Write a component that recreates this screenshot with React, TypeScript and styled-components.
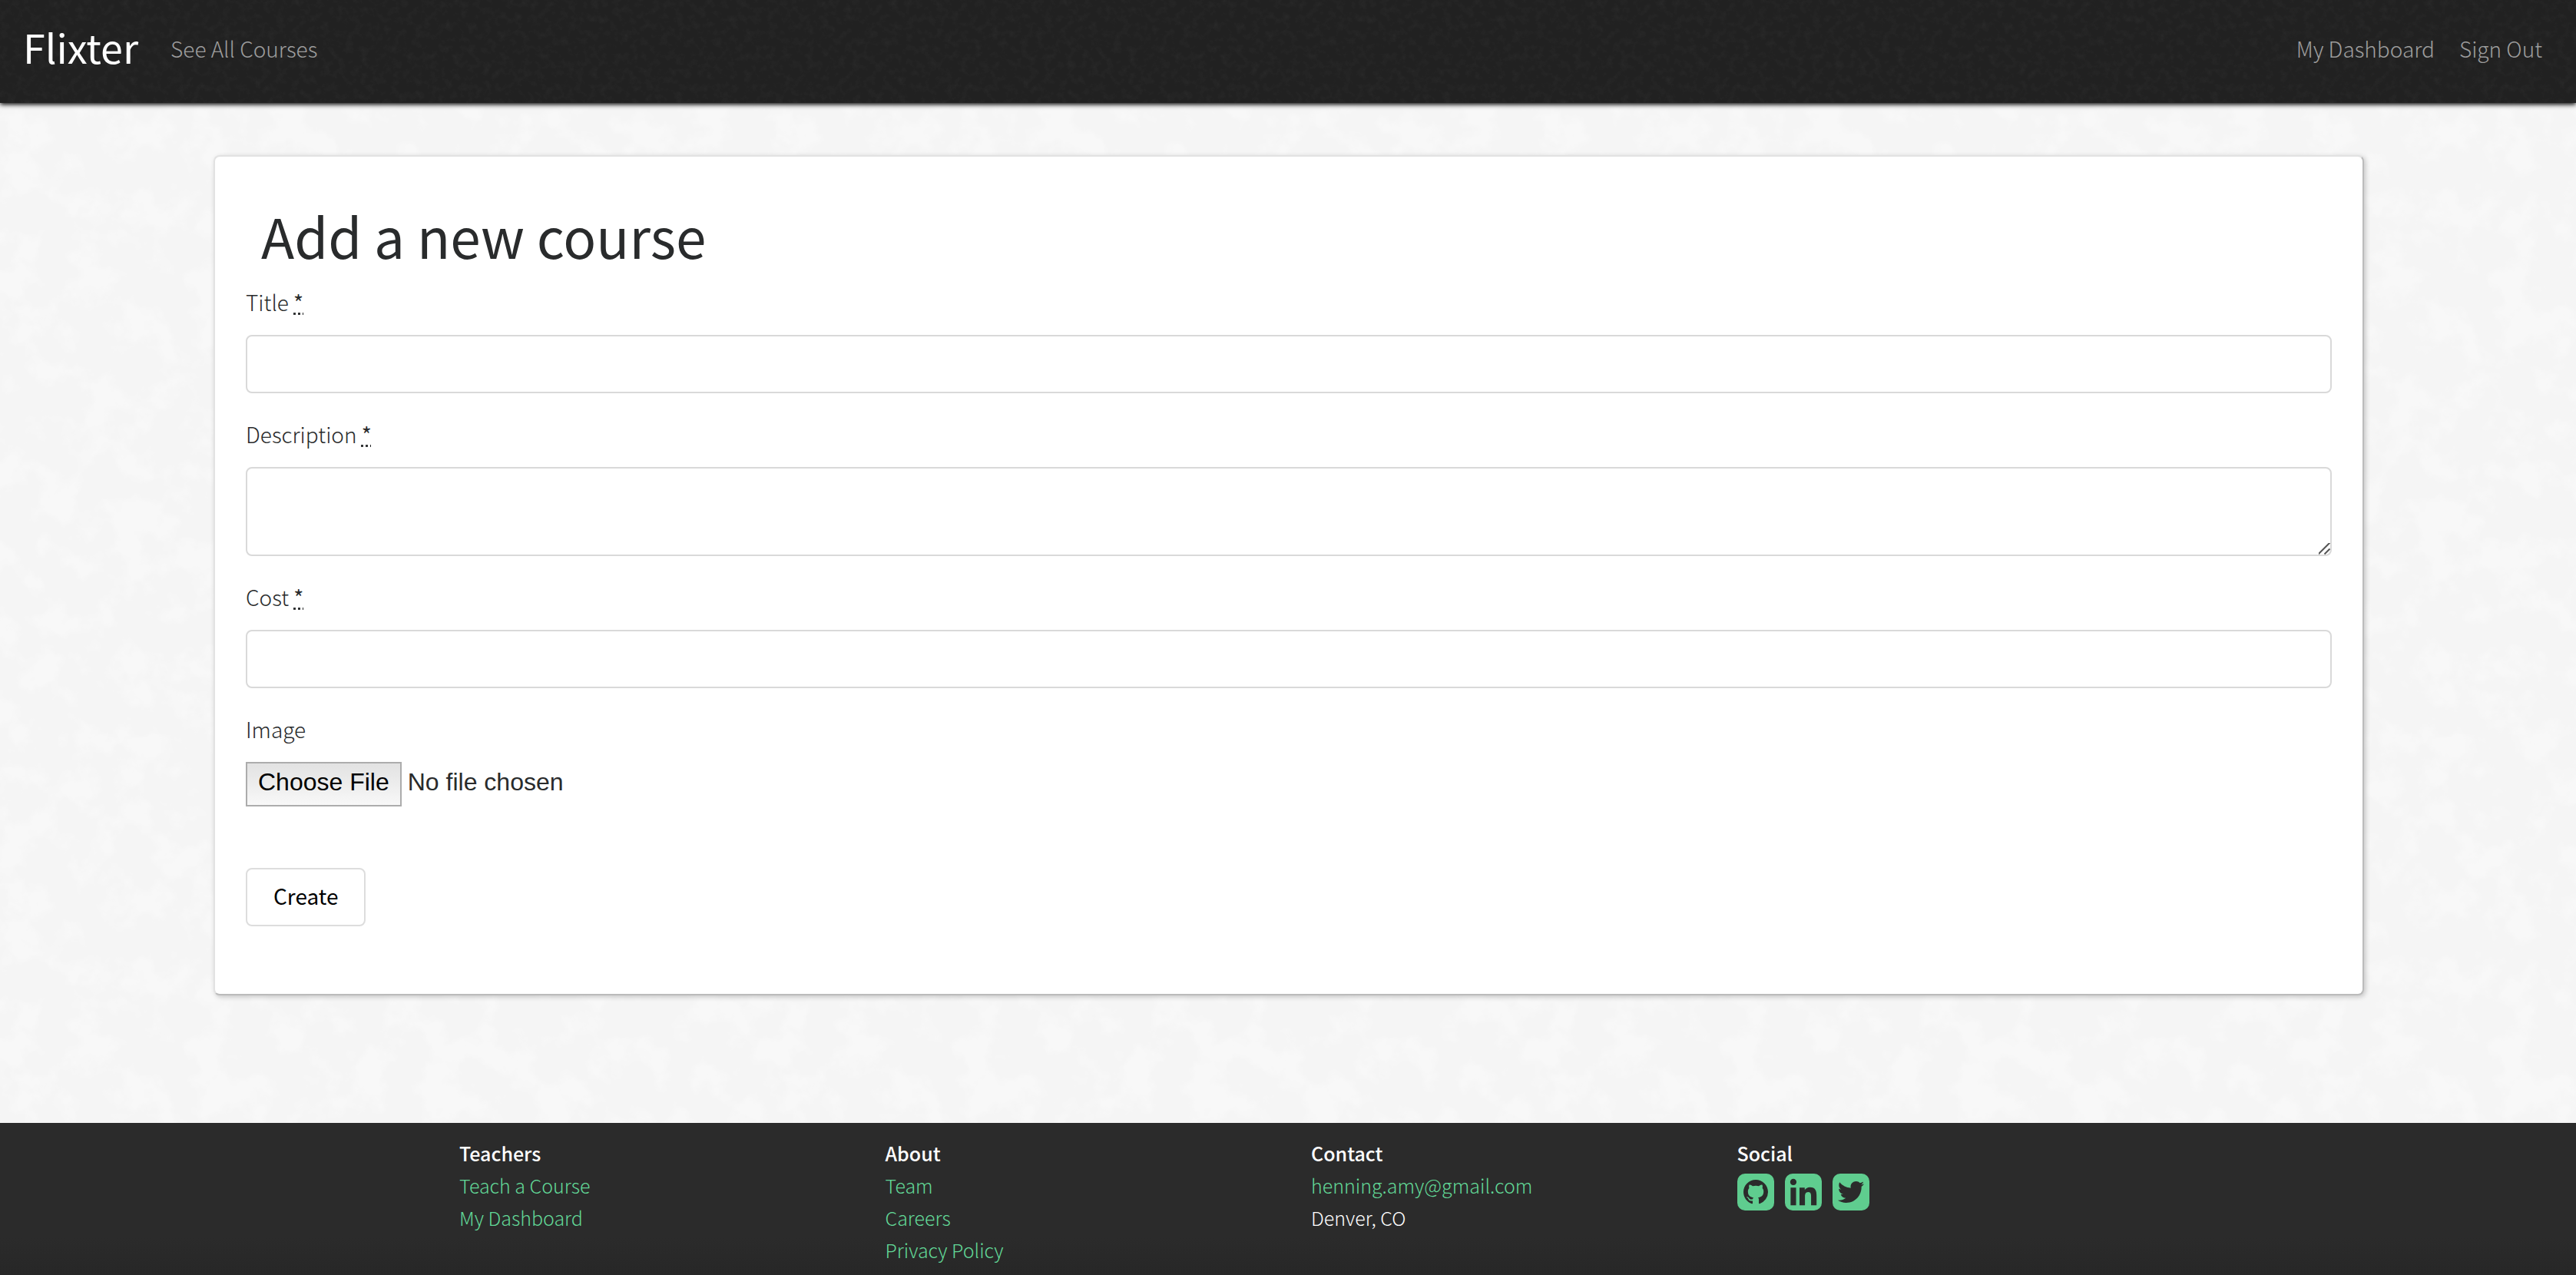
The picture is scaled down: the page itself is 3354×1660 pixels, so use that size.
import React from "react";
import styled, { createGlobalStyle } from "styled-components";
import { FaLinkedin, FaTwitterSquare } from "react-icons/fa";

const sans = `"Source Sans Pro", "Noto Sans CJK JP", "Noto Sans", sans-serif`;

const svgUrl = (svg: string) => `url("data:image/svg+xml,${encodeURIComponent(svg)}")`;

/* A seamless tile of soft white speckles. */
const speckle = (alpha: string, frequency: number, opacity: number) =>
  svgUrl(
    `<svg xmlns="http://www.w3.org/2000/svg" width="1000" height="1000"><filter id="n" x="0" y="0" width="100%" height="100%"><feTurbulence type="fractalNoise" baseFrequency="${frequency}" numOctaves="6" seed="7" stitchTiles="stitch"/><feColorMatrix values="0 0 0 0 1  0 0 0 0 1  0 0 0 0 1  ${alpha}"/></filter><rect width="1000" height="1000" filter="url(#n)" opacity="${opacity}"/></svg>`
  );

const grip = svgUrl(
  `<svg xmlns="http://www.w3.org/2000/svg" width="16" height="16"><path d="M0 15L15 0M8 15L15 8" stroke="#555" stroke-width="2"/></svg>`
);

const GlobalStyle = createGlobalStyle`
  * { box-sizing: border-box; }
  body {
    margin: 0;
    background: #f5f5f5 ${speckle("5 0 0 0 -2.4", 0.02, 0.35)};
    color: #292b2c;
    font-family: ${sans};
    font-size: 28px;
    font-weight: 300;
    line-height: 48px;
  }
  a { text-decoration: none; }
`;

const Page = styled.div`
  display: flex;
  flex-direction: column;
  min-height: 100vh;
`;

const Navbar = styled.nav`
  display: flex;
  align-items: center;
  gap: 32px;
  height: 134px;
  padding: 0 44px 8px 30px;
  background: #212121 ${speckle("2 0 0 0 -1", 0.1, 0.04)};
  box-shadow: 0 2px 6px #000;
`;

const Brand = styled.a`
  margin-right: 10px;
  padding-bottom: 4px;
  color: #fff;
  font-size: 52px;
  font-weight: 400;
  line-height: 84px;
`;

const NavLink = styled.a`
  color: #9d9d9d;
`;

const Spacer = styled.div`
  flex: 1;
`;

const Main = styled.main`
  flex: 1;
  padding: 68px 276px 68px 278px;
`;

const Card = styled.section`
  padding: 62px 40px 88px;
  background: #fff;
  border: 2px solid #e2e2e2;
  border-right-color: #bbb;
  border-bottom-color: #bbb;
  border-radius: 8px;
  box-shadow: 2px 2px 6px rgba(0, 0, 0, 0.2);
`;

const Title = styled.h1`
  margin: 0 0 23px;
  padding-left: 20px;
  font-size: 71px;
  font-weight: 400;
  line-height: 80px;
`;

const Form = styled.form`
  display: flex;
  flex-direction: column;
  align-items: flex-start;
  gap: 29px;
`;

const Field = styled.div`
  display: flex;
  flex-direction: column;
  gap: 19px;
  width: 100%;
`;

const Required = styled.abbr`
  font-weight: 400;
  text-decoration: underline dotted;
`;

const TextInput = styled.input`
  width: 100%;
  height: 76px;
  padding: 12px 24px;
  border: 2px solid #d9d9d9;
  border-radius: 8px;
  background: #fff;
  font: inherit;
`;

const TextArea = styled.textarea`
  display: block;
  width: 100%;
  height: 116px;
  padding: 12px 24px;
  border: 2px solid #d9d9d9;
  border-radius: 8px;
  background: #fff;
  font: inherit;
  resize: vertical;

  &::-webkit-resizer {
    background: ${grip} no-repeat center;
  }
`;

const FileInput = styled.input`
  height: 58px;
  color: #292b2c;
  font: 400 32px/37px "Liberation Sans", Arial, sans-serif;

  &::file-selector-button {
    height: 58px;
    margin: 0 8px 0 0;
    padding: 6px 14px 11px;
    border: 2px solid #acacac;
    border-radius: 0;
    background: linear-gradient(#e2e2e2, #f8f8f8);
    color: #000;
    font: inherit;
  }
`;

const SubmitButton = styled.button`
  height: 76px;
  margin-top: 51px;
  padding: 0 34px 4px;
  border: 2px solid #ddd;
  border-radius: 8px;
  background: #fff;
  color: #000;
  font: inherit;
  font-weight: 400;
`;

const Footer = styled.footer`
  display: grid;
  grid-template-columns: repeat(4, 1fr);
  padding: 18px 568px 12px;
  background: linear-gradient(#2b2b2b, #2b2b2b 75%, #272727);
  color: #fff;
  font-size: 25px;
  line-height: 42px;
`;

const FooterColumn = styled.div`
  display: flex;
  flex-direction: column;
  align-items: flex-start;
  padding: 0 30px;
`;

const FooterTitle = styled.strong`
  font-weight: 500;
`;

const FooterLink = styled.a`
  color: #62d897;
`;

const SocialRow = styled.div`
  display: flex;
  gap: 14px;
  padding-top: 6px;
`;

const SocialLink = styled.a`
  display: flex;
  color: #5fcd8f;
`;

const GithubTile = styled(SocialLink)`
  align-items: center;
  justify-content: center;
  width: 48px;
  height: 48px;
  border-radius: 10px;
  background: #5fcd8f;
  color: #2b2b2b;
`;

const RoundedIcon = styled(SocialLink)`
  overflow: hidden;
  border-radius: 10px;
`;

const GithubMark = () => (
  <svg width="32" height="32" viewBox="0 0 16 16" fill="currentColor" aria-hidden="true">
    <path d="M8 0C3.58 0 0 3.58 0 8c0 3.54 2.29 6.53 5.47 7.59.4.07.55-.17.55-.38 0-.19-.01-.82-.01-1.49-2.01.37-2.53-.49-2.69-.94-.09-.23-.48-.94-.82-1.13-.28-.15-.68-.52-.01-.53.63-.01 1.08.58 1.23.82.72 1.21 1.87.87 2.33.66.07-.52.28-.87.51-1.07-1.78-.2-3.64-.89-3.64-3.95 0-.87.31-1.59.82-2.15-.08-.2-.36-1.02.08-2.12 0 0 .67-.21 2.2.82.64-.18 1.32-.27 2-.27.68 0 1.36.09 2 .27 1.53-1.04 2.2-.82 2.2-.82.44 1.1.16 1.92.08 2.12.51.56.82 1.27.82 2.15 0 3.07-1.87 3.75-3.65 3.95.29.25.54.73.54 1.48 0 1.07-.01 1.93-.01 2.2 0 .21.15.46.55.38A8.013 8.013 0 0016 8c0-4.42-3.58-8-8-8z" />
  </svg>
);

const RequiredMark = () => <Required title="required">*</Required>;

export default function App() {
  return (
    <Page>
      <GlobalStyle />
      <Navbar>
        <Brand href="#">Flixter</Brand>
        <NavLink href="#">See All Courses</NavLink>
        <Spacer />
        <NavLink href="#">My Dashboard</NavLink>
        <NavLink href="#">Sign Out</NavLink>
      </Navbar>
      <Main>
        <Card>
          <Title>Add a new course</Title>
          <Form onSubmit={(e) => e.preventDefault()}>
            <Field>
              <label htmlFor="title">Title <RequiredMark /></label>
              <TextInput id="title" type="text" />
            </Field>
            <Field>
              <label htmlFor="description">Description <RequiredMark /></label>
              <TextArea id="description" />
            </Field>
            <Field>
              <label htmlFor="cost">Cost <RequiredMark /></label>
              <TextInput id="cost" type="text" inputMode="decimal" />
            </Field>
            <Field>
              <label htmlFor="image">Image</label>
              <FileInput id="image" type="file" />
            </Field>
            <SubmitButton type="submit">Create</SubmitButton>
          </Form>
        </Card>
      </Main>
      <Footer>
        <FooterColumn>
          <FooterTitle>Teachers</FooterTitle>
          <FooterLink href="#">Teach a Course</FooterLink>
          <FooterLink href="#">My Dashboard</FooterLink>
        </FooterColumn>
        <FooterColumn>
          <FooterTitle>About</FooterTitle>
          <FooterLink href="#">Team</FooterLink>
          <FooterLink href="#">Careers</FooterLink>
          <FooterLink href="#">Privacy Policy</FooterLink>
        </FooterColumn>
        <FooterColumn>
          <FooterTitle>Contact</FooterTitle>
          <FooterLink href="mailto:henning.amy@gmail.com">henning.amy@gmail.com</FooterLink>
          <span>Denver, CO</span>
        </FooterColumn>
        <FooterColumn>
          <FooterTitle>Social</FooterTitle>
          <SocialRow>
            <GithubTile href="#" aria-label="GitHub"><GithubMark /></GithubTile>
            <RoundedIcon href="#" aria-label="LinkedIn"><FaLinkedin size={48} viewBox="0 32 448 448" /></RoundedIcon>
            <RoundedIcon href="#" aria-label="Twitter"><FaTwitterSquare size={48} viewBox="0 32 448 448" /></RoundedIcon>
          </SocialRow>
        </FooterColumn>
      </Footer>
    </Page>
  );
}
